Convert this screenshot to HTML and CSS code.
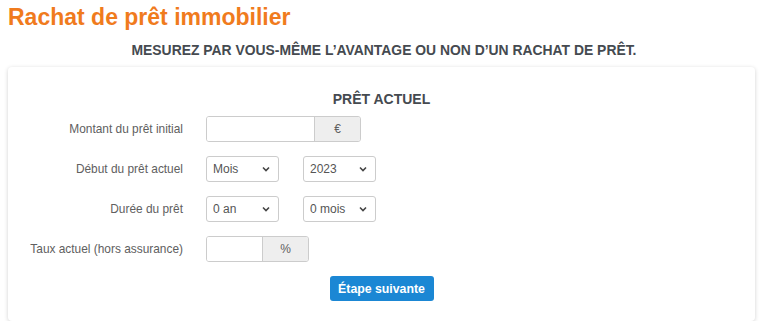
FILE: index.html
```html
<!DOCTYPE html>
<html lang="fr">
<head>
    <meta charset="UTF-8">
    <meta name="viewport" content="width=device-width, initial-scale=1.0">
    <title>Rachat de prêt immobilier</title>
    <link rel="stylesheet" href="styles.css">
</head>
<body>
    <h1 class="page-title">Rachat de prêt immobilier</h1>
    <h2 class="subtitle">Mesurez par vous-même l’avantage ou non d’un rachat de prêt.</h2>
    <div class="card">
        <h3 class="card-title">Prêt actuel</h3>
        <form class="form">
            <label class="label" for="montant">Montant du prêt initial</label>
            <div class="input-group wide">
                <input type="text" id="montant" class="field">
                <span class="addon">€</span>
            </div>

            <label class="label" for="debutMois">Début du prêt actuel</label>
            <div class="pair">
                <select id="debutMois" class="select"><option>Mois</option></select>
                <select class="select"><option>2023</option></select>
            </div>

            <label class="label" for="dureeAn">Durée du prêt</label>
            <div class="pair">
                <select id="dureeAn" class="select"><option>0 an</option></select>
                <select class="select"><option>0 mois</option></select>
            </div>

            <label class="label" for="taux">Taux actuel (hors assurance)</label>
            <div class="input-group narrow">
                <input type="text" id="taux" class="field">
                <span class="addon">%</span>
            </div>
        </form>
        <div class="actions">
            <button type="button" class="btn">Étape suivante</button>
        </div>
    </div>
</body>
</html>
```

FILE: styles.css
```css
body {
    font-family: Arial, "Liberation Sans", sans-serif;
    margin: 0;
    padding: 0 8px;
    background: #fff;
    color: #555;
}
.page-title {
    color: #f07b1d;
    font-size: 23px;
    font-weight: bold;
    margin: 0;
    padding-top: 3px;
    line-height: 28px;
}
.subtitle {
    text-align: center;
    text-transform: uppercase;
    font-size: 13.9px;
    color: #454a50;
    margin: 11px 0 0;
    line-height: 16px;
}
.card {
    margin-top: 9px;
    width: 747px;
    background: #fff;
    border-radius: 4px;
    box-shadow: 0 1px 4px rgba(0, 0, 0, 0.18);
    padding: 24px 0 20px;
}
.card-title {
    text-align: center;
    text-transform: uppercase;
    font-size: 14px;
    color: #454a50;
    margin: 0 0 9px;
    line-height: 16px;
}
.form {
    display: grid;
    grid-template-columns: 175px auto;
    column-gap: 23px;
    row-gap: 14px;
    align-items: center;
}
.label {
    text-align: right;
    font-size: 11.9px;
    color: #606060;
}
.input-group {
    display: flex;
    height: 26px;
    border: 1px solid #ccc;
    border-radius: 3px;
    box-sizing: border-box;
    overflow: hidden;
}
.input-group.wide {
    width: 155px;
}
.input-group.narrow {
    width: 103px;
}
.field {
    flex: 1;
    min-width: 0;
    border: none;
    padding: 0 6px;
    box-sizing: border-box;
    font: inherit;
}
.addon {
    background: #eee;
    border-left: 1px solid #ccc;
    width: 45px;
    display: flex;
    align-items: center;
    justify-content: center;
    font-size: 12px;
    color: #606060;
}
.input-group.narrow .field {
    width: 55px;
    flex: none;
}
.input-group.narrow .addon {
    flex: 1;
}
.pair {
    display: flex;
    gap: 24px;
}
.select {
    width: 73px;
    height: 26px;
    border: 1px solid #ccc;
    border-radius: 3px;
    background: #fff url("data:image/svg+xml,%3Csvg xmlns='http://www.w3.org/2000/svg' width='8' height='6'%3E%3Cpath d='M1 1.5l3 3 3-3' fill='none' stroke='%23444' stroke-width='1.6'/%3E%3C/svg%3E") no-repeat right 8px center;
    appearance: none;
    -webkit-appearance: none;
    padding: 0 6px;
    font-family: inherit;
    font-size: 12px;
    color: #555;
}
.actions {
    display: flex;
    justify-content: center;
    margin-top: 14px;
}
.btn {
    background: #1b87d4;
    color: #fff;
    font-family: inherit;
    font-weight: bold;
    font-size: 12.3px;
    border: none;
    border-radius: 3px;
    width: 104px;
    height: 25px;
}
```
